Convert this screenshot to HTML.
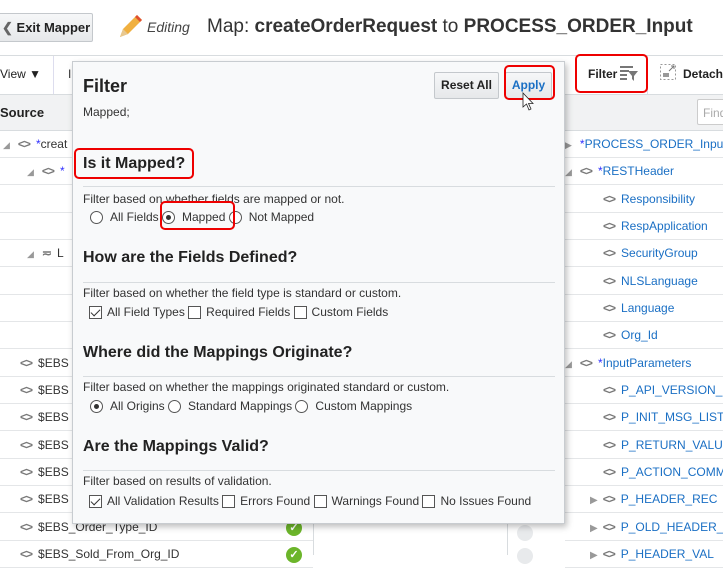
<!DOCTYPE html>
<html><head><meta charset="utf-8"><style>
*{margin:0;padding:0;box-sizing:border-box}
body{width:723px;height:555px;overflow:hidden;background:#fff;font-family:"Liberation Sans",Arial,sans-serif;color:#333;position:relative;font-size:12px}
.a{position:absolute;white-space:nowrap}
.row{position:absolute;height:27px;border-bottom:1px solid #e4e6e8;font-size:12px;color:#333;line-height:27px;white-space:nowrap;overflow:hidden}
.tg{color:#777;font-weight:bold;letter-spacing:-1px;margin-right:6px}
.bl{color:#1a6fc4}
.st{color:#3030ff}
.tri{color:#999;font-size:9px;margin-right:8px}
.pop{position:absolute;left:72px;top:61px;width:493px;height:463px;background:#f8f9fa;border:1px solid #c8ccd0;box-shadow:2px 3px 6px rgba(0,0,0,.25)}
.h{position:absolute;left:10px;font-size:16px;font-weight:bold;color:#222;white-space:nowrap}
.hr{position:absolute;left:10px;width:472px;border-top:1px solid #d8dcdf}
.t{position:absolute;left:10px;font-size:12px;color:#333;white-space:nowrap}
.o{position:absolute;font-size:12px;color:#333;white-space:nowrap;line-height:14px}
.rd{display:inline-block;width:13px;height:13px;border:1px solid #555;border-radius:50%;vertical-align:-3px;margin-right:7px;background:#fff;position:relative}
.rd.on::after{content:"";position:absolute;left:3px;top:3px;width:5px;height:5px;border-radius:50%;background:#333}
.cb{display:inline-block;width:13px;height:13px;border:1px solid #555;vertical-align:-3px;margin-right:5px;background:#fff;position:relative}
.cb.on::after{content:"";position:absolute;left:3px;top:0px;width:4px;height:8px;border:solid #333;border-width:0 1.5px 1.5px 0;transform:rotate(45deg)}
.red{position:absolute;border:2px solid #e00;border-radius:5px}
.btn{position:absolute;background:linear-gradient(#f6f7f8,#e6e8ea);border:1px solid #c4c8cc;border-radius:2px;font-size:12px;font-weight:bold;text-align:center;white-space:nowrap}
.ok{display:inline-block;width:16px;height:16px;border-radius:50%;background:#6cb52a;color:#fff;font-size:11px;text-align:center;line-height:16px;font-weight:bold}
</style></head><body>
<!-- header -->
<div class="btn" style="left:-3px;top:13px;width:96px;height:29px;line-height:27px;font-size:13px;color:#222;text-align:left;padding-left:4px"><span style="color:#666">❮</span> Exit Mapper</div>
<svg class="a" style="left:116px;top:13px" width="28" height="26" viewBox="0 0 28 26"><path d="M4 24 L7 16 L21 2 L26 7 L12 21 Z" fill="#f0b040"/><path d="M21 2 L26 7 L24 9 L19 4Z" fill="#e05030"/><path d="M4 24 L7 16 L12 21Z" fill="#e8c890"/></svg>
<div class="a" style="left:147px;top:19px;font-size:14px;font-style:italic;color:#444">Editing</div>
<div class="a" style="left:207px;top:16px;font-size:19px;color:#333">Map: <b>createOrderRequest</b> to <b>PROCESS_ORDER_Input</b></div>
<!-- toolbar -->
<div class="a" style="left:0;top:55px;width:723px;height:40px;border-top:1px solid #d8dcdf;border-bottom:1px solid #d8dcdf;background:#fff"></div>
<div class="a" style="left:53px;top:56px;height:38px;border-left:1px solid #dde"></div>
<div class="a" style="left:0;top:67px;font-size:12px;color:#222">View ▼</div>
<div class="a" style="left:68px;top:67px;font-size:12px">I</div>
<div class="a" style="left:647px;top:56px;height:38px;border-left:1px solid #dde"></div>
<div class="a" style="left:588px;top:67px;font-size:12px;font-weight:bold;color:#222">Filter</div>
<svg class="a" style="left:620px;top:65px" width="18" height="16"><g fill="#777"><rect x="0" y="1" width="13" height="2"/><rect x="0" y="5" width="9" height="2"/><rect x="0" y="9" width="7" height="2"/><rect x="0" y="13" width="7" height="2"/><path d="M8 6 H18 L14 11 V16 L12 14 V11Z"/></g></svg>
<svg class="a" style="left:660px;top:64px" width="16" height="16"><rect x="0.5" y="0.5" width="15" height="15" fill="none" stroke="#999" stroke-dasharray="2,2"/><path d="M9 7 L14 2 M11 2 H14 V5" stroke="#777" fill="none"/><rect x="3" y="9" width="6" height="4" fill="#999"/></svg>
<div class="a" style="left:683px;top:67px;font-size:12px;font-weight:bold;color:#222">Detach</div>
<div class="red" style="left:575px;top:54px;width:73px;height:39px"></div>
<!-- source header -->
<div class="a" style="left:0;top:95px;width:313px;height:36px;background:#f1f2f3;border-bottom:1px solid #d8dcdf"></div>
<div class="a" style="left:0;top:105px;font-size:13px;font-weight:bold;color:#222">Source</div>
<div class="a" style="left:507px;top:95px;width:216px;height:36px;background:#f1f2f3;border-bottom:1px solid #d8dcdf"></div>
<div class="a" style="left:697px;top:99px;width:40px;height:26px;background:#fff;border:1px solid #ccc;border-radius:2px;color:#aaa;padding:6px 5px">Find</div>
<div class="a" style="left:313px;top:95px;height:460px;border-left:1px solid #d8dcdf"></div>
<div class="a" style="left:507px;top:95px;height:460px;border-left:1px solid #d8dcdf"></div>
<!-- left rows -->
<div class="row" style="left:0;top:131px;width:313px;padding-left:3px"><span class="tri">◢</span><span class="tg">&lt;&gt;</span><span class="st">*</span>creat</div>
<div class="row" style="left:0;top:158px;width:313px;padding-left:27px"><span class="tri">◢</span><span class="tg">&lt;&gt;</span><span class="st">*</span></div>
<div class="row" style="left:0;top:186px;width:313px"></div>
<div class="row" style="left:0;top:213px;width:313px"></div>
<div class="row" style="left:0;top:240px;width:313px;padding-left:27px"><span class="tri">◢</span><span class="tg">≂</span>L</div>
<div class="row" style="left:0;top:268px;width:313px"></div>
<div class="row" style="left:0;top:295px;width:313px"></div>
<div class="row" style="left:0;top:322px;width:313px"></div>
<div class="row" style="left:0;top:350px;width:313px;padding-left:20px"><span class="tg">&lt;&gt;</span>$EBS</div>
<div class="row" style="left:0;top:377px;width:313px;padding-left:20px"><span class="tg">&lt;&gt;</span>$EBS</div>
<div class="row" style="left:0;top:404px;width:313px;padding-left:20px"><span class="tg">&lt;&gt;</span>$EBS</div>
<div class="row" style="left:0;top:432px;width:313px;padding-left:20px"><span class="tg">&lt;&gt;</span>$EBS</div>
<div class="row" style="left:0;top:459px;width:313px;padding-left:20px"><span class="tg">&lt;&gt;</span>$EBS</div>
<div class="row" style="left:0;top:486px;width:313px;padding-left:20px"><span class="tg">&lt;&gt;</span>$EBS</div>
<div class="row" style="left:0;top:514px;width:313px;padding-left:20px"><span class="tg">&lt;&gt;</span>$EBS_Order_Type_ID</div>
<div class="row" style="left:0;top:541px;width:313px;padding-left:20px"><span class="tg">&lt;&gt;</span>$EBS_Sold_From_Org_ID</div>
<div class="a" style="left:286px;top:520px"><span class="ok">✓</span></div>
<div class="a" style="left:286px;top:547px"><span class="ok">✓</span></div>
<div class="a" style="left:517px;top:525px;width:16px;height:16px;border-radius:50%;background:#e8eaec"></div>
<div class="a" style="left:517px;top:548px;width:16px;height:16px;border-radius:50%;background:#e8eaec"></div>
<!-- right rows -->
<div class="row" style="left:565px;top:131px;width:158px;padding-left:0"><span class="tri">▶</span><span class="st">*</span><span class="bl">PROCESS_ORDER_Input</span></div>
<div class="row" style="left:565px;top:158px;width:158px;padding-left:0"><span class="tri">◢</span><span class="tg">&lt;&gt;</span><span class="st">*</span><span class="bl">RESTHeader</span></div>
<div class="row" style="left:565px;top:186px;width:158px;padding-left:38px"><span class="tg">&lt;&gt;</span><span class="bl">Responsibility</span></div>
<div class="row" style="left:565px;top:213px;width:158px;padding-left:38px"><span class="tg">&lt;&gt;</span><span class="bl">RespApplication</span></div>
<div class="row" style="left:565px;top:240px;width:158px;padding-left:38px"><span class="tg">&lt;&gt;</span><span class="bl">SecurityGroup</span></div>
<div class="row" style="left:565px;top:268px;width:158px;padding-left:38px"><span class="tg">&lt;&gt;</span><span class="bl">NLSLanguage</span></div>
<div class="row" style="left:565px;top:295px;width:158px;padding-left:38px"><span class="tg">&lt;&gt;</span><span class="bl">Language</span></div>
<div class="row" style="left:565px;top:322px;width:158px;padding-left:38px"><span class="tg">&lt;&gt;</span><span class="bl">Org_Id</span></div>
<div class="row" style="left:565px;top:350px;width:158px;padding-left:0"><span class="tri">◢</span><span class="tg">&lt;&gt;</span><span class="st">*</span><span class="bl">InputParameters</span></div>
<div class="row" style="left:565px;top:377px;width:158px;padding-left:38px"><span class="tg">&lt;&gt;</span><span class="bl">P_API_VERSION_</span></div>
<div class="row" style="left:565px;top:404px;width:158px;padding-left:38px"><span class="tg">&lt;&gt;</span><span class="bl">P_INIT_MSG_LIST</span></div>
<div class="row" style="left:565px;top:432px;width:158px;padding-left:38px"><span class="tg">&lt;&gt;</span><span class="bl">P_RETURN_VALU</span></div>
<div class="row" style="left:565px;top:459px;width:158px;padding-left:38px"><span class="tg">&lt;&gt;</span><span class="bl">P_ACTION_COMM</span></div>
<div class="row" style="left:565px;top:486px;width:158px;padding-left:25px"><span class="tri" style="font-size:10px;margin-right:5px">▶</span><span class="tg">&lt;&gt;</span><span class="bl">P_HEADER_REC</span></div>
<div class="row" style="left:565px;top:514px;width:158px;padding-left:25px"><span class="tri" style="font-size:10px;margin-right:5px">▶</span><span class="tg">&lt;&gt;</span><span class="bl">P_OLD_HEADER_</span></div>
<div class="row" style="left:565px;top:541px;width:158px;padding-left:25px"><span class="tri" style="font-size:10px;margin-right:5px">▶</span><span class="tg">&lt;&gt;</span><span class="bl">P_HEADER_VAL</span></div>
<!-- popup -->
<div class="pop">
<div class="h" style="top:14px;font-size:18px">Filter</div>
<div class="t" style="top:43px">Mapped;</div>
<div class="btn" style="left:361px;top:10px;width:65px;height:27px;line-height:25px;color:#222">Reset All</div>
<div class="btn" style="left:432px;top:10px;width:47px;height:27px;line-height:25px;color:#1a6fc4">Apply</div>
<div class="h" style="top:93px">Is it Mapped?</div>
<div class="hr" style="top:124px"></div>
<div class="t" style="top:130px">Filter based on whether fields are mapped or not.</div>
<div class="o" style="left:17px;top:148px"><span class="rd"></span>All Fields <span class="rd on"></span>Mapped <span class="rd"></span>Not Mapped</div>
<div class="h" style="top:187px">How are the Fields Defined?</div>
<div class="hr" style="top:220px"></div>
<div class="t" style="top:224px">Filter based on whether the field type is standard or custom.</div>
<div class="o" style="left:16px;top:243px"><span class="cb on"></span>All Field Types <span class="cb"></span>Required Fields <span class="cb"></span>Custom Fields</div>
<div class="h" style="top:282px">Where did the Mappings Originate?</div>
<div class="hr" style="top:314px"></div>
<div class="t" style="top:318px">Filter based on whether the mappings originated standard or custom.</div>
<div class="o" style="left:17px;top:337px"><span class="rd on"></span>All Origins <span class="rd"></span>Standard Mappings <span class="rd"></span>Custom Mappings</div>
<div class="h" style="top:376px">Are the Mappings Valid?</div>
<div class="hr" style="top:408px"></div>
<div class="t" style="top:412px">Filter based on results of validation.</div>
<div class="o" style="left:16px;top:432px"><span class="cb on"></span>All Validation Results <span class="cb"></span>Errors Found <span class="cb"></span>Warnings Found <span class="cb"></span>No Issues Found</div>
</div>
<div class="red" style="left:74px;top:148px;width:120px;height:31px"></div>
<div class="red" style="left:160px;top:201px;width:75px;height:29px"></div>
<div class="red" style="left:504px;top:65px;width:51px;height:35px"></div>
<svg class="a" style="left:522px;top:92px" width="13" height="20"><path d="M1 1 V15 L4.5 12 L7 18 L9 17 L6.5 11.5 H11 Z" fill="#fff" stroke="#222" stroke-width="0.8"/></svg>
</body></html>
